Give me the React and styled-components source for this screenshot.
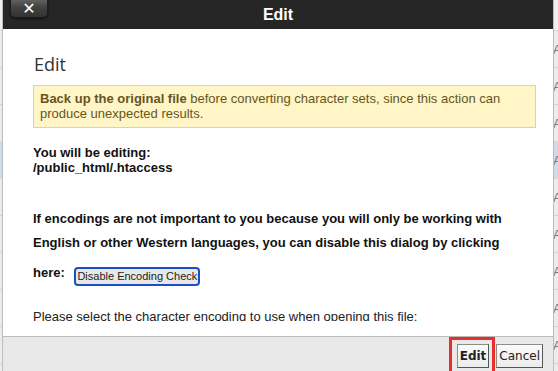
import React from "react";
import styled, { createGlobalStyle } from "styled-components";

const Global = createGlobalStyle`
  html, body { margin: 0; padding: 0; }
  body { width: 558px; height: 371px; overflow: hidden; background: #eeeeee; font-family: "Liberation Sans", Arial, sans-serif; }
`;

const Page = styled.div`
  position: relative;
  width: 558px;
  height: 371px;
  overflow: hidden;
`;

const BackList = styled.div`
  display: flex;
  flex-direction: column;
  padding-top: 30px;
`;

const BackRow = styled.div`
  height: 37px;
  box-sizing: border-box;
  border-top: 1px solid #d4d4d4;
  background: ${(p) => (p.$sel ? "#cfdbe6" : "#ececec")};
  display: flex;
  align-items: center;
  padding-left: 553px;
  font-size: 13px;
  color: #777;
  white-space: nowrap;
`;

const Dialog = styled.div`
  position: absolute;
  left: 3px;
  top: 0;
  width: 550px;
  height: 380px;
  display: flex;
  flex-direction: column;
  background: #fff;
  box-shadow: 0 0 0 1px #bdbdbd;
`;

const TitleBar = styled.div`
  height: 29px;
  flex: none;
  background: #262626;
  position: relative;
  display: flex;
  align-items: center;
  justify-content: center;
  color: #fff;
  font-weight: bold;
  font-size: 16px;
`;

const CloseBtn = styled.button`
  position: absolute;
  left: 7px;
  top: -3px;
  width: 38px;
  height: 21px;
  border: 1px solid #1c1c1c;
  border-radius: 0 0 5px 5px;
  background: linear-gradient(#6a6a6a, #444 45%, #333);
  box-shadow: 0 1px 2px rgba(0, 0, 0, 0.6);
  color: #fff;
  font-weight: bold;
  font-size: 16px;
  line-height: 1;
  padding: 3px 0 0;
  font-family: "DejaVu Sans", sans-serif;
`;

const Body = styled.div`
  flex: none;
  height: 307px;
  box-sizing: border-box;
  padding: 0 17px 15px 30px;
  display: flex;
  flex-direction: column;
`;

const Scroll = styled.div`
  flex: 1;
  overflow: hidden;
  display: flex;
  flex-direction: column;
`;

const Heading = styled.h2`
  margin: 24px 0 0 1px;
  font-family: "Open Sans", sans-serif;
  font-weight: 400;
  font-size: 18px;
  line-height: 22px;
  color: #333;
`;

const Warning = styled.div`
  margin-top: 10px;
  background: #fff5c6;
  border: 1px solid #e5d879;
  padding: 5px 6px 6px;
  font-size: 13px;
  line-height: 15px;
  color: #665522;
`;

const Text = styled.p`
  margin: ${(p) => p.$m || "0"};
  font-size: 13px;
  font-weight: bold;
  line-height: ${(p) => p.$lh || "15px"};
  color: #111;
`;

const HereLine = styled.span`
  display: block;
  margin-top: 6px;
`;

const InlineBtn = styled.button`
  margin-left: 6px;
  height: 19px;
  padding: 0 1px;
  border: 2px solid #1b4fc7;
  border-radius: 4px;
  background: #e8e8e8;
  font-family: "Liberation Sans", Arial, sans-serif;
  font-size: 11px;
  color: #222;
  vertical-align: -3px;
`;

const Plain = styled.p`
  margin: 23px 0 0;
  font-size: 13px;
  line-height: 15px;
  color: #222;
`;

const Footer = styled.div`
  flex: 1;
  border-top: 1px solid #bbbbbb;
  background: #e9e9e9;
  display: flex;
  justify-content: flex-end;
  align-items: flex-start;
  padding: 0 10px 0 0;
`;

const Focus = styled.div`
  border: 3px solid #e3302c;
  padding: 4px 3px 0 5px;
  height: 40px;
  box-sizing: border-box;
`;

const DlgBtn = styled.button`
  height: 24px;
  padding: 0 2px;
  border: 1px solid #8c8c8c;
  border-right-color: #555;
  border-bottom-color: #555;
  border-radius: 0;
  background: linear-gradient(#fafafa, #ececec);
  font-family: "DejaVu Sans", sans-serif;
  font-size: 12px;
  font-weight: ${(p) => (p.$primary ? "bold" : "normal")};
  color: #222;
`;

const Side = styled.div`
  padding-top: 7px;
  margin-left: 1px;
`;

export default function App() {
  const rows = Array.from({ length: 10 });
  return (
    <Page>
      <Global />
      <BackList>
        {rows.map((_, i) => (
          <BackRow key={i} $sel={i === 3}>
            {i % 2 === 0 ? "Al" : "A,"}
          </BackRow>
        ))}
      </BackList>
      <Dialog>
        <TitleBar>
          <CloseBtn>✕</CloseBtn>
          Edit
        </TitleBar>
        <Body>
          <Scroll>
            <Heading>Edit</Heading>
            <Warning>
              <b>Back up the original file</b> before converting character sets, since this action can
              produce unexpected results.
            </Warning>
            <Text $m="17px 0 0">
              You will be editing:
              <br />
              /public_html/.htaccess
            </Text>
            <Text $m="32px 0 0" $lh="24px">
              If encodings are not important to you because you will only be working with English or
              other Western languages, you can disable this dialog by clicking
              <HereLine>
                here: <InlineBtn>Disable Encoding Check</InlineBtn>
              </HereLine>
            </Text>
            <Plain>Please select the character encoding to use when opening this file:</Plain>
          </Scroll>
        </Body>
        <Footer>
          <Focus>
            <DlgBtn $primary>Edit</DlgBtn>
          </Focus>
          <Side>
            <DlgBtn>Cancel</DlgBtn>
          </Side>
        </Footer>
      </Dialog>
    </Page>
  );
}
